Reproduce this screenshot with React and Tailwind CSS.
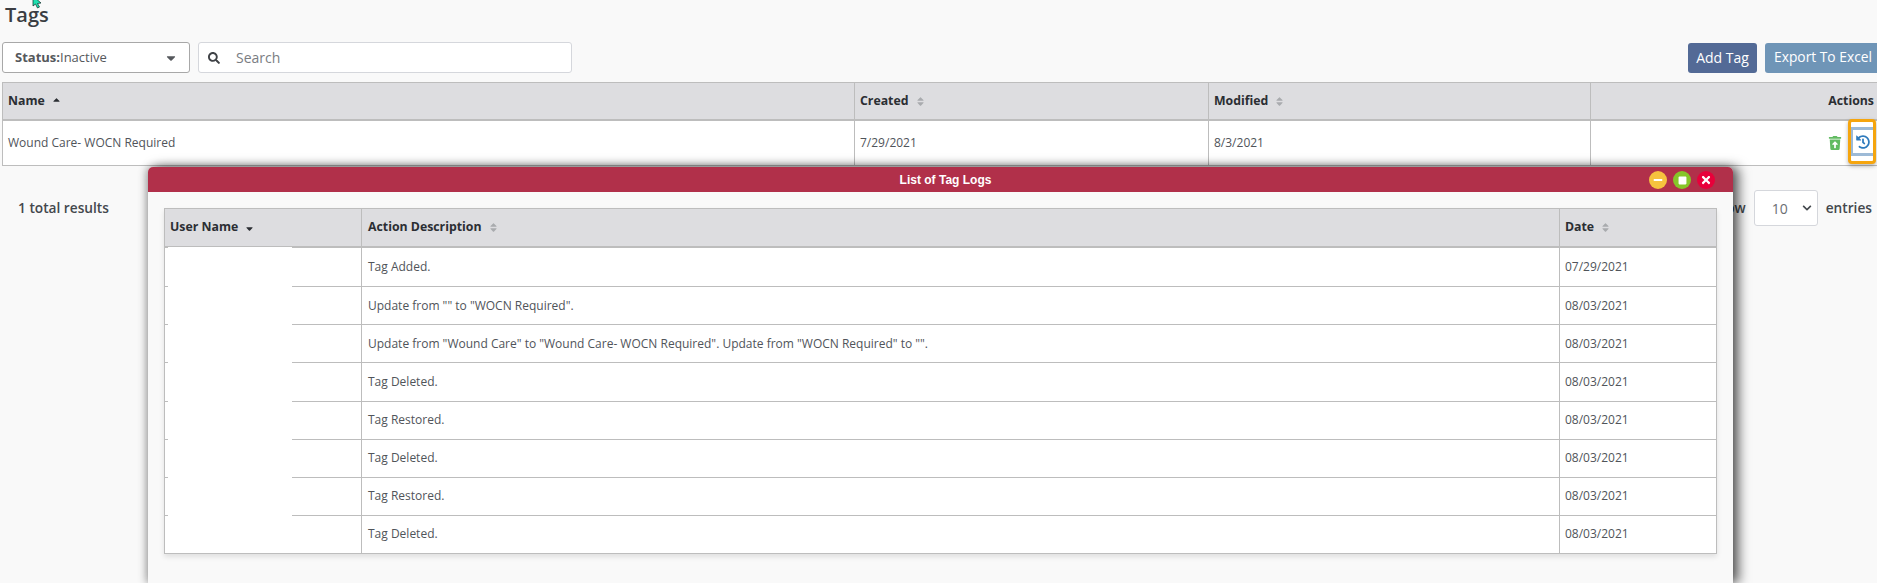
import React from 'react';
import { FaHistory, FaSearch, FaTrashRestore, FaMinus, FaSquare, FaTimes, FaSort, FaSortUp, FaSortDown, FaChevronDown, FaCaretDown } from 'react-icons/fa';

const logs = [
    ['Tag Added.', '07/29/2021'],
    ['Update from "" to "WOCN Required".', '08/03/2021'],
    ['Update from "Wound Care" to "Wound Care- WOCN Required". Update from "WOCN Required" to "".', '08/03/2021'],
    ['Tag Deleted.', '08/03/2021'],
    ['Tag Restored.', '08/03/2021'],
    ['Tag Deleted.', '08/03/2021'],
    ['Tag Restored.', '08/03/2021'],
    ['Tag Deleted.', '08/03/2021'],
];

const HeaderCell = ({ label, icon, className }) => (
    <div className={`flex items-center gap-[6px] text-[12.3px] font-bold text-[#2b2e33] ${className}`}>
        {label}
        {icon}
    </div>
);

const sortIcon = <FaSort className="text-[#a9abae] text-[11px]" />;

const TagLogsModal = () => (
    <div className="absolute left-[148px] top-[167px] w-[1585px] h-[416px] bg-[#f9f9f9] rounded-t-[5px] shadow-[6px_0_12px_rgba(0,0,0,0.6),-2px_0_8px_rgba(0,0,0,0.3)]">
        <div className="relative flex items-center justify-center h-[25px] pl-[10px] bg-[#b1304a] rounded-t-[5px] text-[12px] font-bold text-white font-['Liberation_Sans',sans-serif]">
            List of Tag Logs
            <div className="absolute right-[18px] top-[4px] flex gap-[6px]">
                <span className="flex items-center justify-center w-[18px] h-[18px] rounded-full bg-[#f6c23e] text-white text-[10px]"><FaMinus /></span>
                <span className="flex items-center justify-center w-[18px] h-[18px] rounded-full bg-[#86c529] text-white text-[9px]"><FaSquare /></span>
                <span className="flex items-center justify-center w-[18px] h-[18px] rounded-full bg-[#e8003a] text-white text-[12px]"><FaTimes /></span>
            </div>
        </div>
        <div className="mt-[16px] ml-[16px] w-[1553px] border border-[#bdbdbd] bg-white shadow-[0_3px_5px_rgba(0,0,0,0.1)]">
            <div className="flex h-[39px] bg-[#dddde0] border-b-2 border-[#bdbdbd]">
                <HeaderCell label="User Name" icon={<FaSortDown className="text-[#2b2e33] text-[11px] mb-[2px]" />} className="w-[197px] px-[5px] border-r border-[#bdbdbd]" />
                <HeaderCell label="Action Description" icon={sortIcon} className="w-[1198px] px-[6px] border-r border-[#bdbdbd]" />
                <HeaderCell label="Date" icon={sortIcon} className="flex-1 px-[5px]" />
            </div>
            {logs.map(([action, date], i) => (
                <div key={i} className={`flex h-[38.125px] text-[12px] text-[#50545a] ${i > 0 ? 'border-t border-[#bdbdbd]' : ''}`}>
                    <div className="w-[197px] border-r border-[#bdbdbd] flex">
                        <div className="w-[3px]" />
                        {/* name is blanked out in the source picture */}
                        <div className="w-[124px] bg-white -mt-px" />
                    </div>
                    <div className="w-[1198px] border-r border-[#bdbdbd] flex items-center px-[6px]">{action}</div>
                    <div className="flex-1 flex items-center px-[5px]">{date}</div>
                </div>
            ))}
        </div>
    </div>
);

export default function App() {
    return (
        <div className="relative h-[583px] overflow-hidden bg-[#f9f9f9] font-['Open_Sans',sans-serif]">
            <svg className="absolute left-[32px] top-[-4px]" width="10" height="13" viewBox="0 0 10 13">
                <path d="M1 0 L1 10 L3.5 8 L5.5 12 L7.5 11 L5.5 7.5 L9 7 Z" fill="#1fe0b0" stroke="#0b2b26" strokeWidth="0.7" />
            </svg>
            <h1 className="pl-[5px] pt-[1px] h-[42px] text-[20px] font-semibold leading-[27px] text-[#3a3d42]">Tags</h1>
            <div className="flex items-center h-[31px] pl-[2px]">
                <div className="flex items-center justify-between w-[188px] h-[31px] pl-[12px] pr-[11px] bg-white border border-[#a8a8a8] rounded-[3px] text-[13px] text-[#55585c]">
                    <span><b className="text-[#55585c]">Status:</b>Inactive</span>
                    <FaCaretDown className="text-[#55585c] text-[14px]" />
                </div>
                <div className="flex items-center ml-[8px] w-[374px] h-[31px] pl-[9px] bg-white border border-[#d5d7dc] rounded-[3px] text-[14px] text-[#7a7d82]">
                    <FaSearch className="text-[#3f4246] text-[12px]" />
                    <span className="ml-[16px]">Search</span>
                </div>
                <div className="flex-1" />
                <button className="w-[69px] h-[30px] bg-[#536a96] rounded-[3px] text-[14px] text-white">Add Tag</button>
                <button className="ml-[8px] w-[112px] h-[30px] bg-[#6f95b7] rounded-l-[3px] text-[13.8px] text-white text-left pl-[9px] whitespace-nowrap">Export To Excel</button>
            </div>
            <div className="mt-[9px] ml-[2px] border border-[#bdbdbd] border-r-0 bg-white">
                <div className="flex h-[38px] bg-[#dddde0] border-b-2 border-[#bdbdbd]">
                    <HeaderCell label="Name" icon={<FaSortUp className="text-[#2b2e33] text-[11px] mt-[3px]" />} className="w-[852px] px-[5px] border-r border-[#bdbdbd]" />
                    <HeaderCell label="Created" icon={sortIcon} className="w-[354px] px-[5px] border-r border-[#bdbdbd]" />
                    <HeaderCell label="Modified" icon={sortIcon} className="w-[382px] px-[5px] border-r border-[#bdbdbd]" />
                    <div className="flex-1 flex items-center justify-end pr-[3px] text-[12.3px] font-bold text-[#2b2e33]">Actions</div>
                </div>
                <div className="flex h-[44px] text-[12px] text-[#50545a]">
                    <div className="w-[852px] border-r border-[#bdbdbd] flex items-center px-[5px]">Wound Care- WOCN Required</div>
                    <div className="w-[354px] border-r border-[#bdbdbd] flex items-center px-[5px]">7/29/2021</div>
                    <div className="w-[382px] border-r border-[#bdbdbd] flex items-center px-[5px]">8/3/2021</div>
                    <div className="flex-1 flex items-center justify-end pr-[1px]">
                        <FaTrashRestore className="text-[#62bb62] text-[14px] mr-[6px]" />
                        <div className="flex items-center justify-center w-[28px] h-[45px] -mt-[3px] border-[3px] border-[#f5a50e] rounded-[4px] bg-white shadow-[0_2px_4px_rgba(0,0,0,0.3)]">
                            <div className="flex items-center justify-center w-full h-[29px] border-y-[3px] border-l-[2px] border-[#9dbad6]">
                                <FaHistory className="text-[#2f7bbd] text-[14px]" />
                            </div>
                        </div>
                    </div>
                </div>
            </div>
            <div className="flex items-center h-[36px] mt-[24px] text-[13.7px] font-semibold text-[#44484d]">
                <span className="pl-[18px]">1 total results</span>
                <div className="flex-1" />
                <span>Show</span>
                <div className="flex items-center justify-between ml-[8px] w-[64px] h-[36px] pl-[17px] pr-[5px] bg-white border border-[#d5d7dc] rounded-[3px] text-[14px] font-normal text-[#6b6e73]">
                    10
                    <FaChevronDown className="text-[#44484d] text-[10px]" />
                </div>
                <span className="ml-[8px] mr-[5px]">entries</span>
            </div>
            <TagLogsModal />
        </div>
    );
}
